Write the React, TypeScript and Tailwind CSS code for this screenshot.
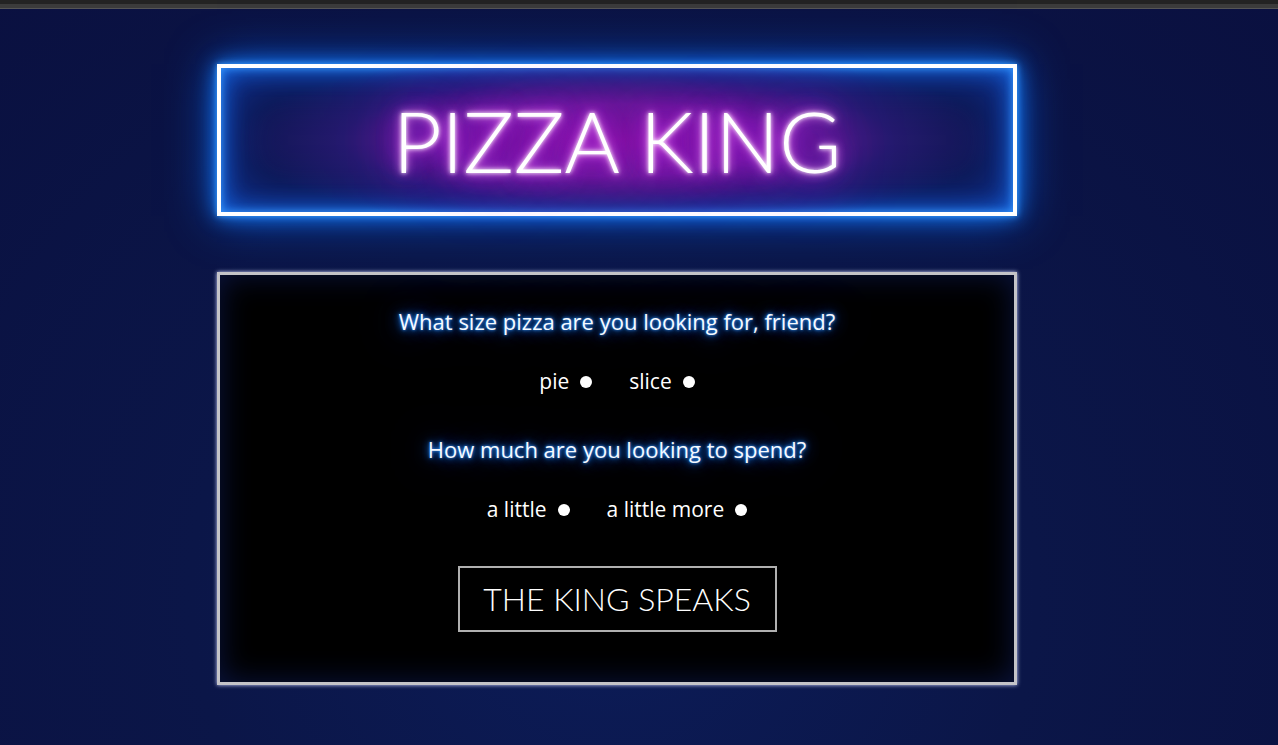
import { useState } from "react";

const questions = [
  { q: "What size pizza are you looking for, friend?", name: "size", opts: ["pie", "slice"] },
  { q: "How much are you looking to spend?", name: "price", opts: ["a little", "a little more"] },
];

export default function App() {
  const [picked, setPicked] = useState<Record<string, string>>({});

  return (
    <div className="min-h-[745px] w-full bg-[radial-gradient(ellipse_at_48%_80%,#0c1c58_0%,#0b1648_45%,#0a1040_100%)] font-['Open_Sans',sans-serif]">
      {/* browser chrome strip */}
      <div className="h-[4px] bg-[#232323]" />
      <div className="h-[4px] bg-[#3b3b3b]" />
      <div className="h-[1px] bg-[#555]" />

      <div className="pl-[217px] pt-[55px]">
        <div className="w-[800px]">
          {/* neon sign */}
          <div className="flex h-[152px] items-center justify-center border-[4px] border-white bg-[#0d1650] shadow-[0_0_6px_#3aa0ff,0_0_18px_#1a7fff,0_0_44px_#0a5cd8,inset_0_0_8px_#3a9cff,inset_0_0_24px_#1a70ec,inset_0_0_56px_#0e44b8]">
            <div className="flex h-full w-full items-center justify-center bg-[radial-gradient(ellipse_380px_90px_at_50%_50%,#7a1598_0%,#641a94_40%,rgba(60,30,140,0.5)_72%,rgba(12,20,72,0)_100%)]">
              <h1 className="font-['Lato',sans-serif] text-[85px] font-light leading-none tracking-[-0.3px] text-white [text-shadow:0_0_4px_#fff,0_0_10px_#ff9cff,0_0_22px_#d23cff,0_0_46px_#a000d8,0_0_70px_#8a00c8]">
                PIZZA KING
              </h1>
            </div>
          </div>

          {/* order card */}
          <div className="mt-[56px] flex h-[413px] flex-col items-center border-[3px] border-[#c4c4c8] bg-black pt-[28px] shadow-[0_0_4px_#cfd6ff,inset_0_0_30px_#0a1440]">
            {questions.map((item, i) => (
              <div key={item.name} className={`flex flex-col items-center ${i > 0 ? "mt-[34px]" : ""}`}>
                <p className="text-[22px] leading-[36px] text-[#f6faff] [text-shadow:0_0_3px_#3b9bff,0_0_7px_#1a7fff,0_0_16px_#1266e0,0_0_40px_#0b3aa0]">
                  {item.q}
                </p>
                <div className="mt-[26px] flex items-center gap-[37px]">
                  {item.opts.map((o) => (
                    <label key={o} className="flex cursor-pointer items-center gap-[11px] text-[21px] leading-[32px] text-white">
                      {o}
                      <span
                        onClick={() => setPicked({ ...picked, [item.name]: o })}
                        className="mt-[2px] block h-[12px] w-[12px] rounded-full bg-white"
                      />
                    </label>
                  ))}
                </div>
              </div>
            ))}

            <button className="mt-[41px] flex h-[66px] w-[319px] items-center justify-center border-2 border-[#b0b0b0] bg-black font-['Lato',sans-serif] text-[32px] font-light text-white">
              THE KING SPEAKS
            </button>
          </div>
        </div>
      </div>
    </div>
  );
}
